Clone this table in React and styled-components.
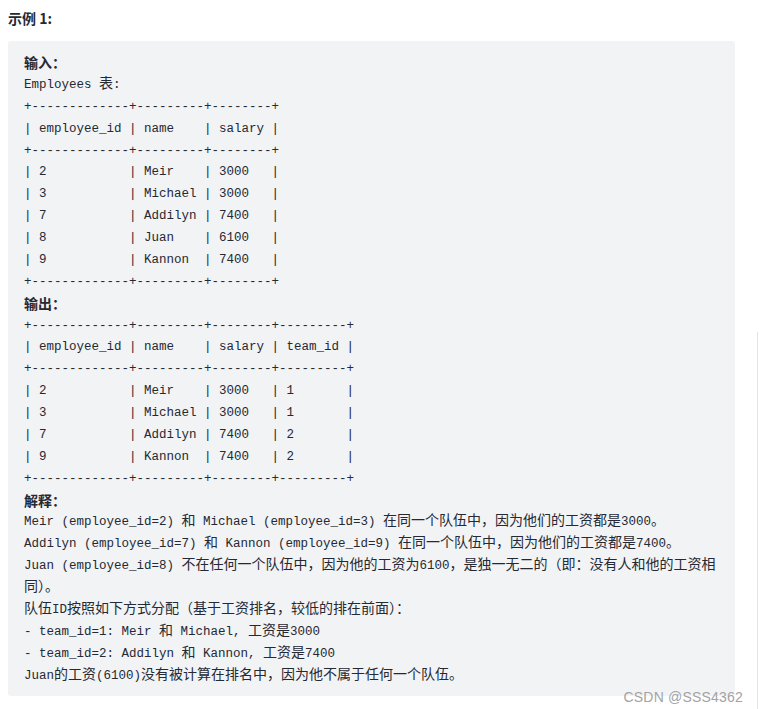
import React from "react";
import styled, { createGlobalStyle } from "styled-components";

const GlobalStyle = createGlobalStyle`
  html, body {
    margin: 0;
    background: #ffffff;
  }
  body {
    padding: 8px;
    font-family: "Liberation Sans", "Noto Sans CJK SC", sans-serif;
    color: #252933;
  }
`;

const Page = styled.div`
  position: relative;
  width: 727px;
`;

const Title = styled.p`
  margin: 0 0 13px;
  height: 20px;
  line-height: 20px;
  font-size: 14px;
  font-weight: 700;
  color: #252933;
  font-family: "Noto Sans CJK SC", sans-serif;
`;

const Pre = styled.div`
  background: #f2f3f5;
  border-radius: 3px;
  padding: 10px 16px 11px;
  font-family: "Liberation Mono", "Noto Sans CJK SC", monospace;
  font-size: 12.5px;
  line-height: 21.88px;
  color: #252933;
  white-space: pre-wrap;
`;

const Line = styled.div`
  min-height: 21.88px;
  padding-top: 2px;
  margin-bottom: -2px;
`;

const Label = styled.div`
  font-family: "Noto Sans CJK SC", sans-serif;
  font-size: 14px;
  font-weight: 700;
  line-height: 21.88px;
  height: 21.88px;
  padding-top: 1px;
  margin-bottom: -1px;
`;

const Han = styled.span`
  font-family: "Noto Sans CJK SC", sans-serif;
  font-size: 14px;
  line-height: 1;
`;

const Watermark = styled.span`
  position: absolute;
  right: -8px;
  bottom: -9px;
  font-family: "Liberation Sans", Arial, sans-serif;
  font-size: 14px;
  line-height: 16px;
  color: #a3a3a3;
  letter-spacing: 0.2px;
`;

const EdgeLine = styled.div`
  position: fixed;
  right: 1px;
  top: 332px;
  bottom: 0;
  width: 1px;
  background: #e4e4e4;
`;

function Mixed({ text }) {
  const parts = text.split(/([\u3000-\u303f\u4e00-\u9fff\uff00-\uffef]+)/);
  return parts.map((p, i) =>
    i % 2 === 1 ? <Han key={i}>{p}</Han> : <React.Fragment key={i}>{p}</React.Fragment>
  );
}

const input = [
  "Employees 表:",
  "+-------------+---------+--------+",
  "| employee_id | name    | salary |",
  "+-------------+---------+--------+",
  "| 2           | Meir    | 3000   |",
  "| 3           | Michael | 3000   |",
  "| 7           | Addilyn | 7400   |",
  "| 8           | Juan    | 6100   |",
  "| 9           | Kannon  | 7400   |",
  "+-------------+---------+--------+",
];

const output = [
  "+-------------+---------+--------+---------+",
  "| employee_id | name    | salary | team_id |",
  "+-------------+---------+--------+---------+",
  "| 2           | Meir    | 3000   | 1       |",
  "| 3           | Michael | 3000   | 1       |",
  "| 7           | Addilyn | 7400   | 2       |",
  "| 9           | Kannon  | 7400   | 2       |",
  "+-------------+---------+--------+---------+",
];

const explain = [
  "Meir (employee_id=2) 和 Michael (employee_id=3) 在同一个队伍中，因为他们的工资都是3000。",
  "Addilyn (employee_id=7) 和 Kannon (employee_id=9) 在同一个队伍中，因为他们的工资都是7400。",
  "Juan (employee_id=8) 不在任何一个队伍中，因为他的工资为6100，是独一无二的（即：没有人和他的工资相同）。",
  "队伍ID按照如下方式分配（基于工资排名，较低的排在前面）：",
  "- team_id=1: Meir 和 Michael, 工资是3000",
  "- team_id=2: Addilyn 和 Kannon, 工资是7400",
  "Juan的工资(6100)没有被计算在排名中，因为他不属于任何一个队伍。",
];

export default function App() {
  return (
    <>
      <GlobalStyle />
      <Page>
        <Title>示例 1:</Title>
        <Pre>
          <Label>输入：</Label>
          {input.map((l, i) => (
            <Line key={"i" + i}><Mixed text={l} /></Line>
          ))}
          <Label>输出：</Label>
          {output.map((l, i) => (
            <Line key={"o" + i}>{l}</Line>
          ))}
          <Label>解释：</Label>
          {explain.map((l, i) => (
            <Line key={"e" + i}><Mixed text={l} /></Line>
          ))}
        </Pre>
        <Watermark>CSDN @SSS4362</Watermark>
      </Page>
      <EdgeLine />
    </>
  );
}
